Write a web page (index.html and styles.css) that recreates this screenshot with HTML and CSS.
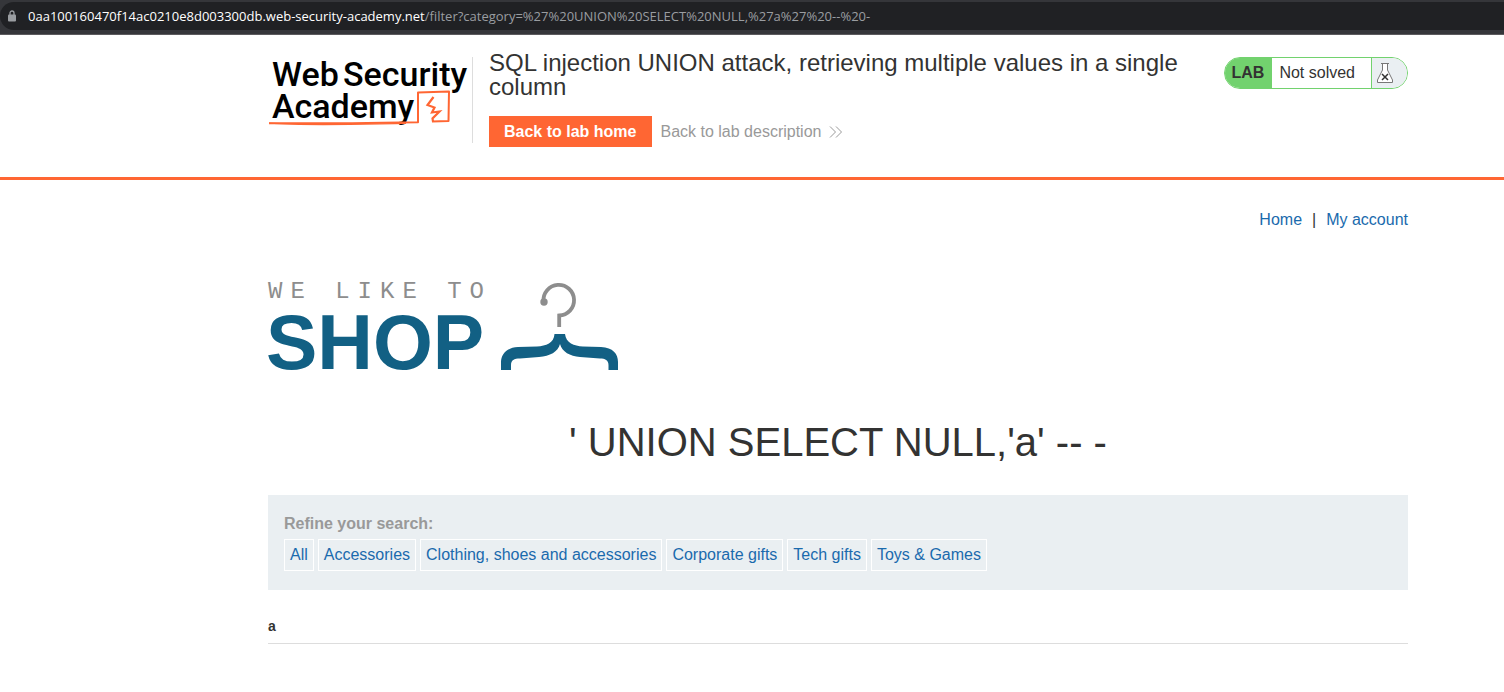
FILE: index.html
```html
<!DOCTYPE html>
<html lang="en">
<head>
<meta charset="utf-8">
<title>SQL injection UNION attack, retrieving multiple values in a single column</title>
<link rel="stylesheet" href="styles.css">
</head>
<body>
<div class="browser-bar">
  <div class="address">
    <svg class="lock" width="8" height="12" viewBox="0 0 8 12" aria-hidden="true">
      <path d="M2 5V3a2 2 0 0 1 4 0v2" fill="none" stroke="#9a9da1" stroke-width="1.3"/>
      <rect x="0" y="4.5" width="8" height="7" rx="1" fill="#9a9da1"/>
    </svg>
    <span class="url"><span class="host">0aa100160470f14ac0210e8d003300db.web-security-academy.net</span>/filter?category=%27%20UNION%20SELECT%20NULL,%27a%27%20--%20-</span>
  </div>
</div>
<header class="lab-header">
  <div class="container header-row">
    <a class="academy-logo" href="#" aria-label="Web Security Academy">
      <svg width="204" height="86" viewBox="0 0 204 86">
        <g class="logo-text">
          <text x="4" y="29">Web</text>
          <text x="75" y="29">Security</text>
          <text x="4" y="61">Academy</text>
        </g>
        <path d="M1 66.2C48 66.8 100 66 150 65.2L150 35.5 181 34.6 180.500 64 164 64.500" fill="none" stroke="#ff6633" stroke-width="2" stroke-linejoin="round"/>
        <path d="M1 66.200C40 69 90 67.200 138 66.400" fill="none" stroke="#ff6633" stroke-width="1.200"/>
        <path d="M165.500 40L159.500 48 166.500 50.500 164 55.500 171.500 54.500 164.500 61.500 165 64.500" fill="none" stroke="#ff6633" stroke-width="2.200"/>
      </svg>
    </a>
    <div class="title-block">
      <h2>SQL injection UNION attack, retrieving multiple values in a single column</h2>
      <div class="actions">
        <a class="button" href="#">Back to lab home</a>
        <a class="description-link" href="#">Back to lab description
          <svg width="14" height="12" viewBox="0 0 14 12" aria-hidden="true"><path d="M1 .5L6.500 6 1 11.500M7 .5L12.500 6 7 11.500" fill="none" stroke="#999" stroke-width="1"/></svg>
        </a>
      </div>
    </div>
    <div class="lab-status">
      <span class="lab-label">LAB</span>
      <span class="lab-state">Not solved</span>
      <span class="lab-icon">
        <svg width="18" height="22" viewBox="0 0 18 22" aria-hidden="true">
          <path d="M5 1.500H13M6.500 1.500V8L1.500 18V20.500H16.500V18L11.500 8V1.500" fill="#fff" stroke="#777" stroke-width="1"/>
          <path d="M6 12L12 18M12 12L6 18" stroke="#333" stroke-width="1.500"/>
        </svg>
      </span>
    </div>
  </div>
</header>
<main class="container">
  <nav class="top-links"><a href="#">Home</a><span>|</span><a href="#">My account</a></nav>
  <div class="shop-logo">
    <svg width="352" height="92" viewBox="0 0 352 92" role="img" aria-label="We like to shop">
      <text class="tagline" x="0" y="17">WE LIKE TO</text>
      <text class="shop" x="-2" y="88">SHOP</text>
      <path d="M275.500 20.500A15.300 15.300 0 1 1 291.200 34.500V46" fill="none" stroke="#8d8d8d" stroke-width="3.800"/>
      <circle cx="276" cy="21" r="3.700" fill="#8d8d8d"/>
      <path d="M286.500 53H297C298 62 306 65 315 65.500L333 66C345 66.500 350 73 350 81V89H340.500V84C340.500 79 337 77.500 332 77.500L312 76C302 75 294 71 292 63C290 71 282 75 271 76L252 77.500C246 77.500 243 79 243 84V89H233V81C233 73 239 66.500 250 66L269 65.500C278 65 286 62 286.500 53Z" fill="#126084"/>
    </svg>
  </div>
  <h1>' UNION SELECT NULL,'a' -- -</h1>
  <section class="search-filters">
    <h3>Refine your search:</h3>
    <div class="filter-list">
      <a href="#">All</a>
      <a href="#">Accessories</a>
      <a href="#">Clothing, shoes and accessories</a>
      <a href="#">Corporate gifts</a>
      <a href="#">Tech gifts</a>
      <a href="#">Toys &amp; Games</a>
    </div>
  </section>
  <table class="results">
    <tbody><tr><th scope="row">a</th></tr></tbody>
  </table>
</main>
</body>
</html>
```
FILE: styles.css
```css
* { box-sizing: border-box; }
body {
  margin: 0;
  background: #fff;
  color: #333332;
  font: 16px/20px "Liberation Sans", Arial, sans-serif;
}
a { color: #1a6aad; text-decoration: none; }
.browser-bar {
  padding: 2px 0 4px;
  background: #35363a;
  border-bottom: 1px solid #5c5b5e;
}
.address {
  display: flex;
  align-items: center;
  gap: 12px;
  height: 28px;
  padding-left: 8px;
  background: #202124;
  border-radius: 14px 0 0 14px;
  color: #9a9da1;
  font: 13px/28px "Open Sans", sans-serif;
  white-space: nowrap;
}
.host { color: #fff; }
.container { padding: 0 96px 0 268px; }
.lab-header {
  padding: 15px 0 30px;
  border-bottom: 3px solid #ff6633;
}
.header-row { display: flex; align-items: flex-start; }
.academy-logo {
  margin-top: 7px;
  border-right: 1px solid #ddd;
}
.academy-logo svg { display: block; overflow: visible; }
.logo-text {
  font: 500 34px Roboto, sans-serif;
  fill: #000;
}
.title-block { flex: 1; padding: 1px 40px 0 16px; }
h2 { margin: 0; font-size: 24px; line-height: 24px; font-weight: 400; }
.actions { display: flex; align-items: center; gap: 8px; margin-top: 17px; }
.button {
  padding: 0 16px 0 15px;
  background: #ff6633;
  color: #fff;
  font-weight: 700;
  line-height: 31px;
}
.description-link { display: flex; align-items: center; gap: 8px; color: #999; }
.lab-status {
  display: flex;
  height: 32px;
  margin-top: 7px;
  border: 1px solid #72d26e;
  border-radius: 16px;
  overflow: hidden;
  line-height: 30px;
}
.lab-label { padding: 0 8px 0 7px; background: #72d26e; font-weight: 700; }
.lab-state { padding: 0 16px 0 7px; }
.lab-icon {
  display: flex;
  align-items: center;
  width: 36px;
  padding-left: 4px;
  border-left: 1px solid #72d26e;
  background: #eaeff2;
}
.lab-icon svg { flex: none; }
.top-links { display: flex; justify-content: flex-end; gap: 10px; padding-top: 30px; }
.shop-logo { margin-top: 51px; }
.shop-logo svg { display: block; overflow: visible; }
.tagline { font: 24px "Liberation Mono", monospace; letter-spacing: 8px; fill: #8d8d8d; }
.shop { font: 700 77px "Liberation Sans", Arial, sans-serif; fill: #126084; }
h1 {
  margin: 44px 0 28px;
  font-size: 40px;
  line-height: 50px;
  font-weight: 400;
  text-align: center;
}
.search-filters { padding: 19px 16px; background: #eaeff2; }
h3 { margin: 0; color: #999; font-size: 16px; line-height: 20px; }
.filter-list { display: flex; flex-wrap: wrap; gap: 4px; margin-top: 5px; }
.filter-list a { padding: 0 5px; border: 1px solid #fff; line-height: 30px; }
.results { width: 100%; margin-top: 26px; border-collapse: collapse; }
.results th {
  padding: 0 0 7px;
  border-bottom: 1px solid #ddd;
  font-size: 14px;
  text-align: left;
}
```
